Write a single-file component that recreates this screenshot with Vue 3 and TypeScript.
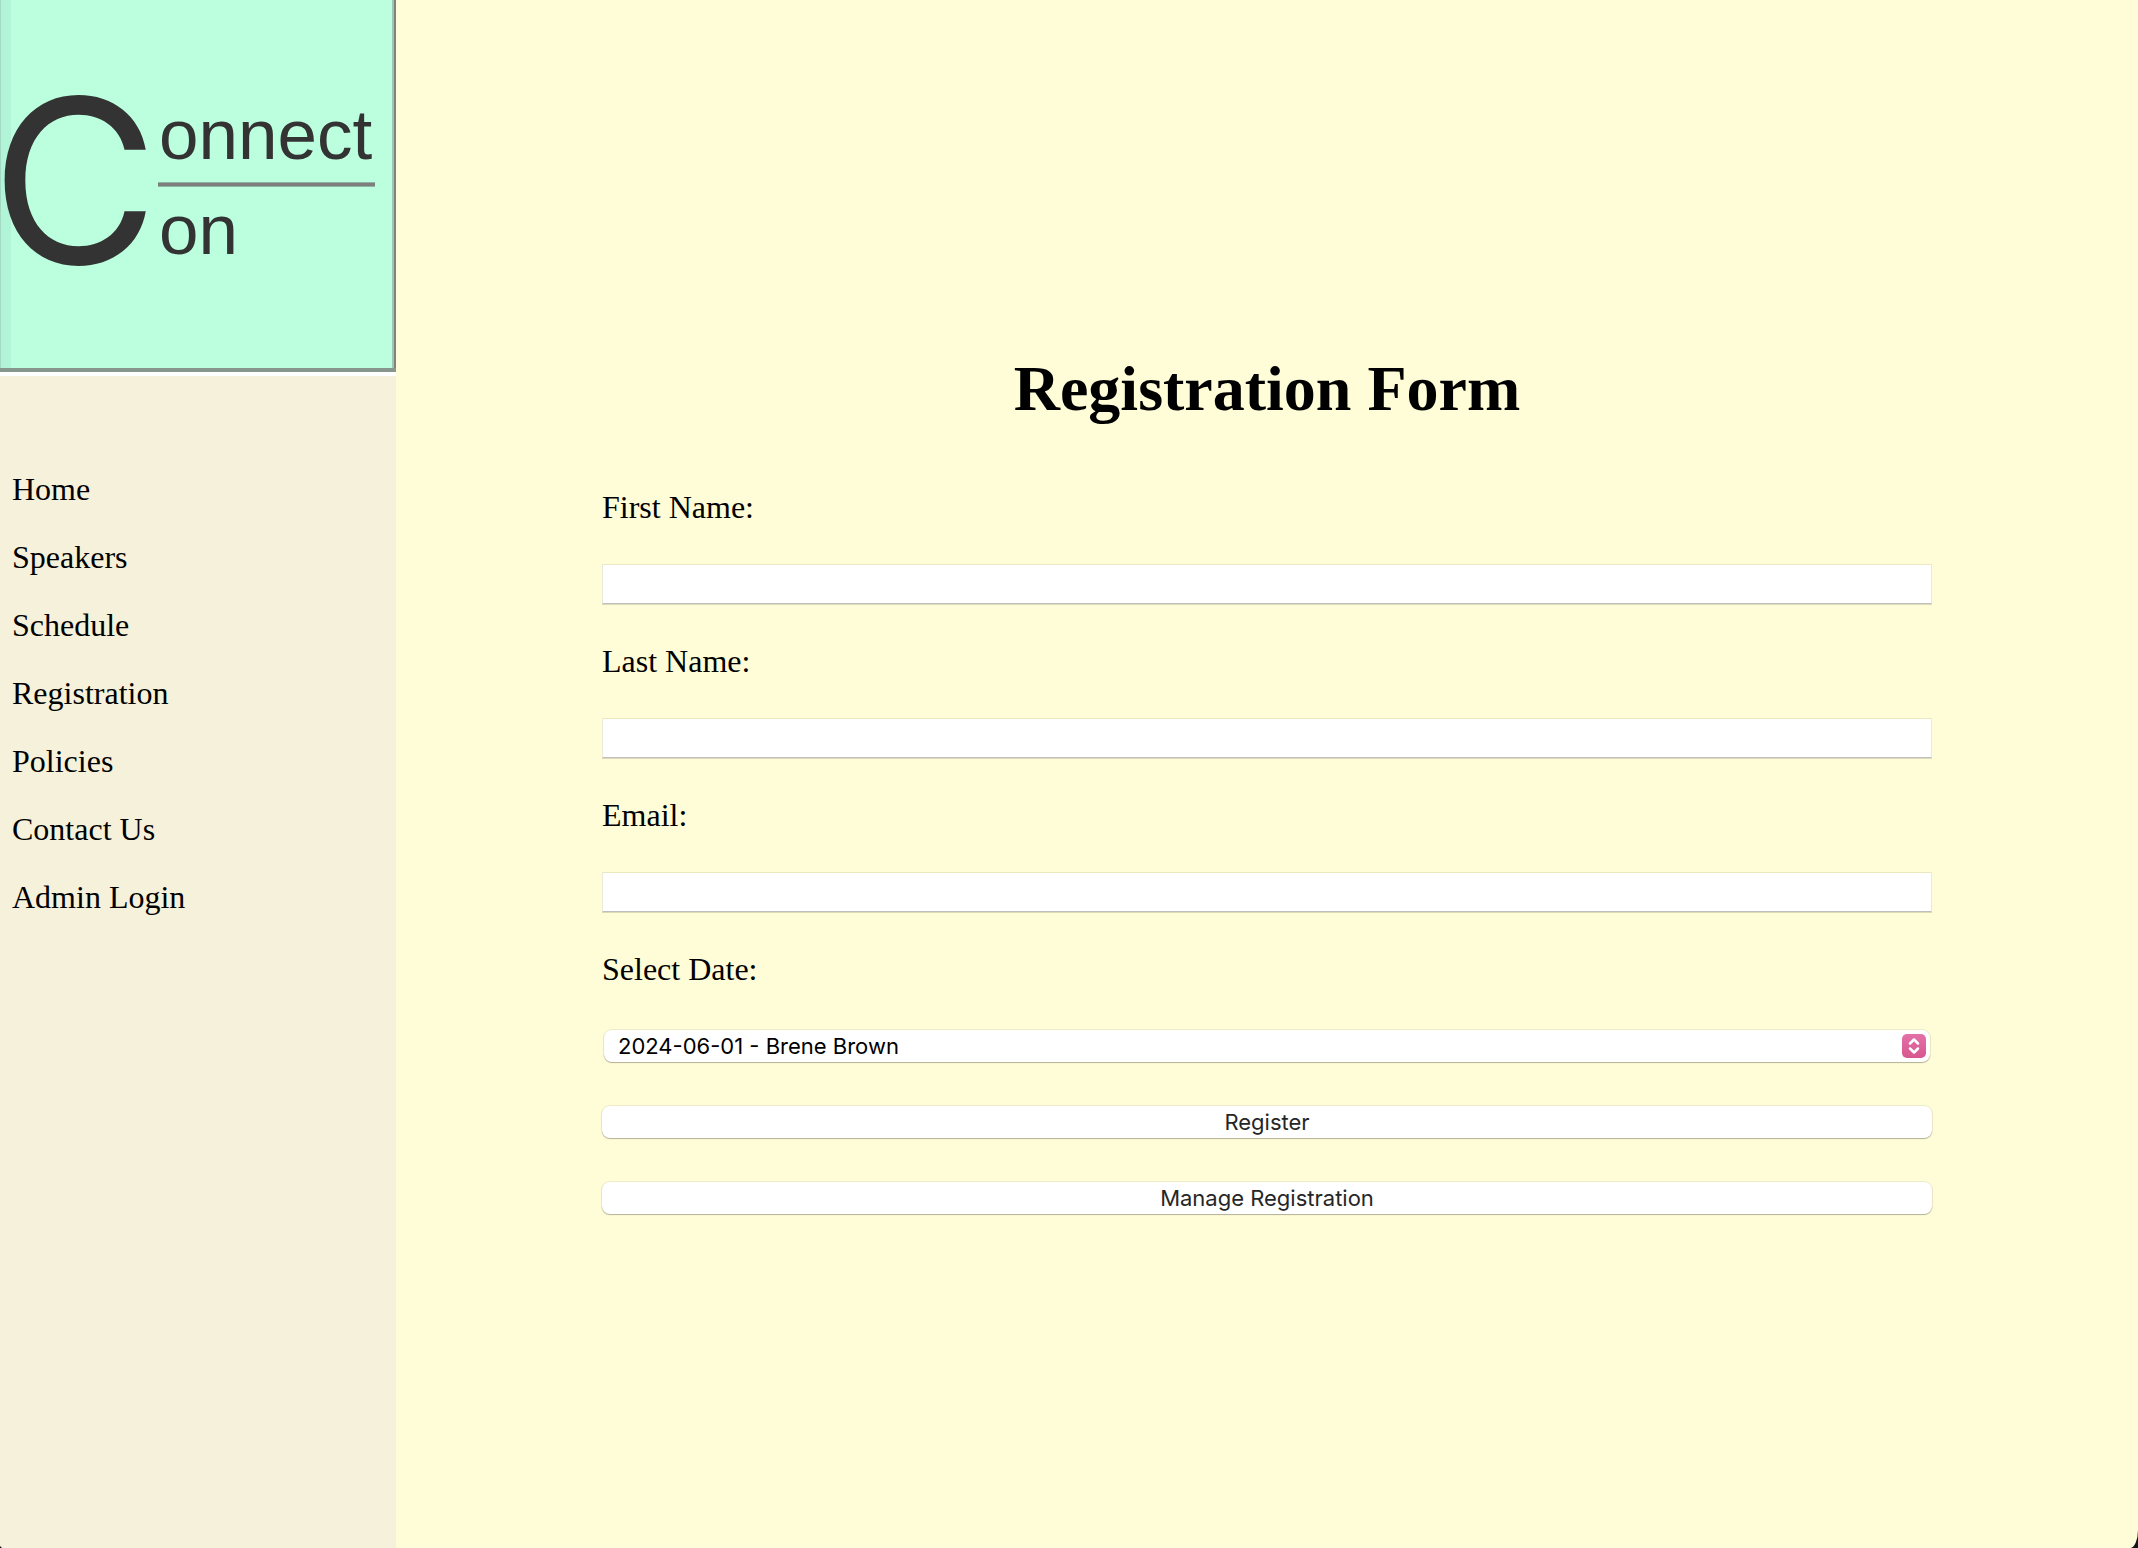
<script setup lang="ts">
import { ref } from 'vue'

interface TextField {
  id: string
  label: string
  type: string
}

const links: string[] = [
  'Home',
  'Speakers',
  'Schedule',
  'Registration',
  'Policies',
  'Contact Us',
  'Admin Login',
]

const fields: TextField[] = [
  { id: 'first-name', label: 'First Name:', type: 'text' },
  { id: 'last-name', label: 'Last Name:', type: 'text' },
  { id: 'email', label: 'Email:', type: 'email' },
]

const values = ref<Record<string, string>>({})
const dates: string[] = ['2024-06-01 - Brene Brown']
const date = ref(dates[0])
</script>

<template>
  <div class="page">
    <aside class="sidebar">
      <a class="logo" href="#">
        <svg class="logo-art" viewBox="0 0 396 372" role="img" aria-label="Connect Con">
          <rect width="396" height="372" fill="#bcffde" />
          <rect width="11" height="372" fill="#b1f4d8" />
          <rect width="1" height="372" fill="#a3d8c2" />
          <rect x="392" width="2" height="372" fill="#9fc6b2" />
          <rect x="394" width="2" height="372" fill="#7f827f" />
          <rect y="368" width="396" height="4" fill="#87978d" />
          <text class="initial" x="-9" y="264" font-size="229">C</text>
          <text x="159" y="159" font-size="71">onnect</text>
          <text x="159" y="254" font-size="71">on</text>
          <rect x="158" y="182" width="217" height="5" fill="#8fb3a2" />
          <rect x="158" y="183" width="217" height="3" fill="#7d7f7d" />
        </svg>
      </a>
      <nav class="nav">
        <a v-for="link in links" :key="link" href="#">{{ link }}</a>
      </nav>
    </aside>

    <main class="content">
      <h1>Registration Form</h1>
      <form class="form" @submit.prevent>
        <template v-for="field in fields" :key="field.id">
          <label :for="field.id">{{ field.label }}</label>
          <input :id="field.id" v-model="values[field.id]" :type="field.type" />
        </template>
        <label for="date">Select Date:</label>
        <div class="select">
          <select id="date" v-model="date">
            <option v-for="item in dates" :key="item" :value="item">{{ item }}</option>
          </select>
          <svg class="arrows" viewBox="0 0 24 24" aria-hidden="true">
            <defs>
              <linearGradient id="pink" x1="0" y1="0" x2="0" y2="1">
                <stop offset="0" stop-color="#e272a8" />
                <stop offset="1" stop-color="#d9568f" />
              </linearGradient>
            </defs>
            <rect width="24" height="24" rx="5" fill="url(#pink)" />
            <path
              d="M8 9.500 12 5.500 16 9.500M8 14.500 12 18.500 16 14.500"
              fill="none"
              stroke="#fff"
              stroke-width="2.500"
              stroke-linecap="round"
              stroke-linejoin="round"
            />
          </svg>
        </div>
        <div class="actions">
          <button type="submit">Register</button>
          <button type="button">Manage Registration</button>
        </div>
      </form>
    </main>
  </div>
</template>

<style>
body {
  background: #14141a;
}
</style>

<style scoped>
.page {
  display: grid;
  grid-template-columns: 396px 1fr;
  min-height: 100vh;
  overflow: hidden;
  border-radius: 0 0 8px 4px / 0 0 18px 4px;
  background: #fffdd7;
  color: #000;
  font: 32px/36px "Liberation Serif", "Times New Roman", serif;
}

.sidebar {
  background: #f6f1da;
}

.logo {
  display: block;
  border-bottom: 4px solid #fff;
}

.logo-art {
  display: block;
  width: 100%;
  fill: #333;
  font-family: "Liberation Sans", Helvetica, sans-serif;
}

.initial {
  font-family: Inter, sans-serif;
}

.nav {
  display: flex;
  flex-direction: column;
  align-items: flex-start;
  gap: 32px;
  padding: 95px 12px 32px;
}

.nav a {
  color: #000;
  text-decoration: none;
}

.content {
  padding: 353px 206px 64px;
}

h1 {
  margin: 0 0 64px;
  font-size: 64px;
  line-height: 72px;
  text-align: center;
}

.form {
  display: flex;
  flex-direction: column;
  gap: 39px;
}

.form input {
  box-sizing: border-box;
  height: 40px;
  padding: 0 6px;
  border: 1px solid #ebe9dc;
  border-top-color: #ece8c0;
  border-bottom-color: #bfbfbf;
  border-radius: 0;
  background: #fff;
  box-shadow: 0 1px #dcdab9;
  font: inherit;
}

.select {
  position: relative;
  margin: 4px 2px 5px;
}

select,
button {
  display: block;
  box-sizing: border-box;
  width: 100%;
  height: 32px;
  border: 0;
  border-radius: 8px;
  background: #fff;
  box-shadow: 0 0 1px 1px rgba(0, 0, 0, 0.07), 0 1px 1px rgba(0, 0, 0, 0.25);
  font: 22px/32px Inter, sans-serif;
}

select {
  appearance: none;
  padding: 0 40px 0 14px;
  color: #000;
}

.arrows {
  position: absolute;
  top: 4px;
  right: 4px;
  width: 24px;
  height: 24px;
  pointer-events: none;
}

.actions {
  display: flex;
  flex-direction: column;
  gap: 44px;
}

button {
  padding: 0;
  color: #262626;
}
</style>
